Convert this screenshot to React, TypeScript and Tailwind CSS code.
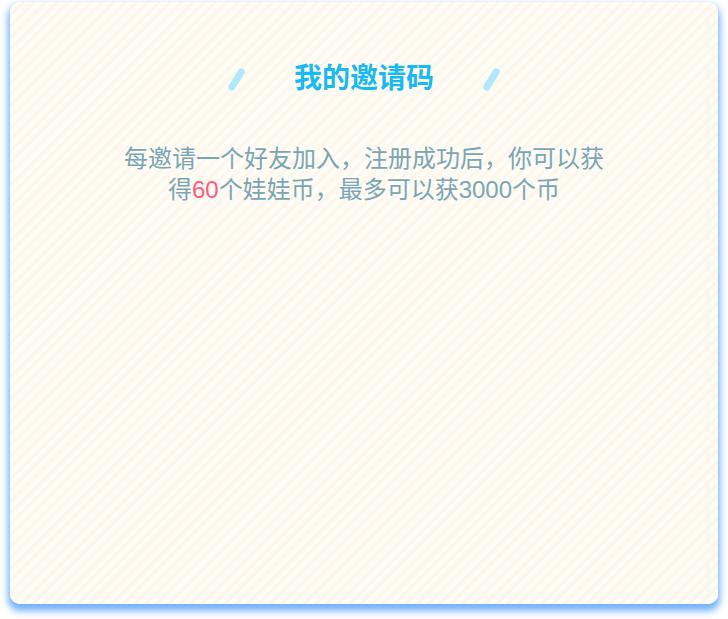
import React from "react";

const InviteCard: React.FC = function () {
    return (
        <div className="w-[728px] h-[619px] bg-white pt-[2px] px-[10px]">
            <div
                className="h-[602px] rounded-[10px] shadow-[0_5px_7px_2px_rgba(100,170,248,0.9)] bg-[repeating-linear-gradient(135deg,#fdf7eb_0px,#fdf7eb_3px,#fffcf5_3px,#fffcf5_8px)]"
                style={{fontFamily: '"Liberation Sans", "Noto Sans CJK SC", sans-serif'}}
            >
                <div className="flex flex-row justify-center items-center gap-[54px] pt-[59px] h-[95px]">
                    <div className="w-[7px] h-[25px] rounded-full bg-[#aee8fa] rotate-[32deg]" />
                    <h2 className="text-[28px] leading-[36px] font-bold text-[#19b9f1]">我的邀请码</h2>
                    <div className="w-[7px] h-[25px] rounded-full bg-[#aee8fa] rotate-[32deg]" />
                </div>
                <p className="mt-[46px] text-center text-[24px] leading-[31px] text-[#79a6b7]">
                    <span className="block">每邀请一个好友加入，注册成功后，你可以获</span>
                    <span className="block">
                        得<span className="text-[#ff5b82]">60</span>个娃娃币，最多可以获3000个币
                    </span>
                </p>
            </div>
        </div>
    );
};

export default function App() {
    return <InviteCard />;
}
